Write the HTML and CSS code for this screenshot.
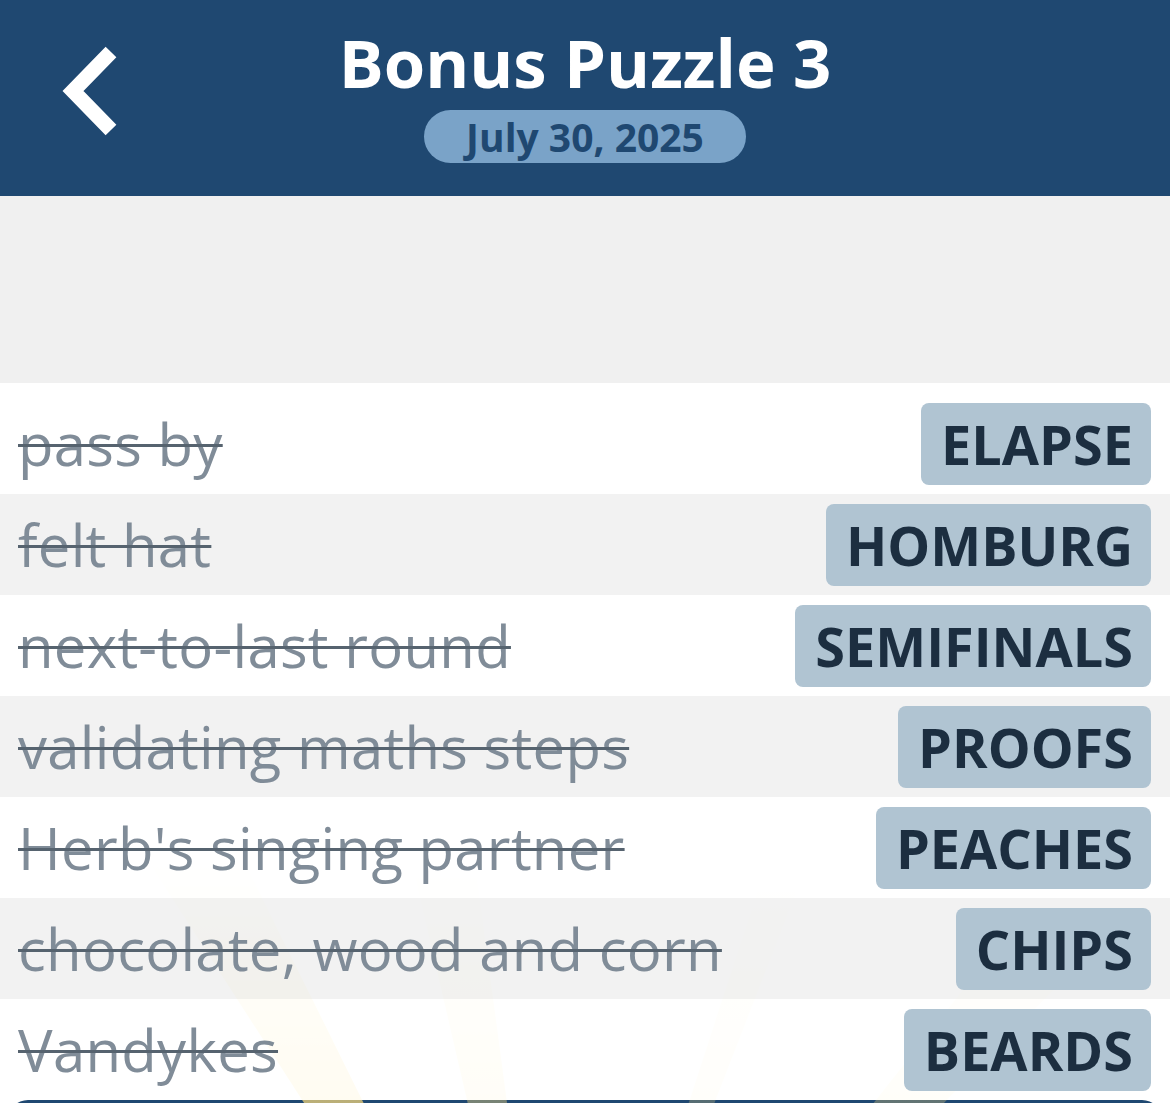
FILE: index.html
```html
<!DOCTYPE html>
<html lang="en">
<head>
  <meta charset="UTF-8">
  <meta name="viewport" content="width=device-width, initial-scale=1.0">
  <title>Bonus Puzzle 3</title>
  <link rel="stylesheet" href="styles.css">
</head>
<body>
  <header class="header">
    <a href="#back" class="back-btn" aria-label="Back">
      <svg width="60" height="90" viewBox="0 0 60 90">
        <polyline points="50,6 12,45 50,84" fill="none" stroke="#fff" stroke-width="15" stroke-linejoin="miter" />
      </svg>
    </a>
    <div class="header-title">
      <h1>Bonus Puzzle 3</h1>
      <div class="date-pill">July 30, 2025</div>
    </div>
  </header>

  <div class="spacer"></div>

  <main class="clue-list">
    <!-- background sunburst -->
    <svg class="rays" width="1170" height="720" viewBox="0 0 1170 720">
      <defs>
        <linearGradient id="ray-fade" gradientUnits="userSpaceOnUse" x1="0" y1="470" x2="0" y2="720">
          <stop offset="0" stop-color="#ffdc7a" stop-opacity="0" />
          <stop offset="1" stop-color="#ffdc7a" stop-opacity="1" />
        </linearGradient>
      </defs>
      <polygon points="560,1117 130,450 230,450" fill="url(#ray-fade)" opacity="0.7" />
      <polygon points="560,1117 370,300 451,300" fill="url(#ray-fade)" opacity="0.4" />
      <polygon points="560,1117 1000,560 1060,600" fill="url(#ray-fade)" opacity="0.3" />
      <polygon points="560,1117 760,500 800,500" fill="url(#ray-fade)" opacity="0.25" />
    </svg>

    <div class="clue-row">
      <span class="clue">pass by</span>
      <span class="answer">ELAPSE</span>
    </div>
    <div class="clue-row">
      <span class="clue">felt hat</span>
      <span class="answer">HOMBURG</span>
    </div>
    <div class="clue-row">
      <span class="clue">next-to-last round</span>
      <span class="answer">SEMIFINALS</span>
    </div>
    <div class="clue-row">
      <span class="clue">validating maths steps</span>
      <span class="answer">PROOFS</span>
    </div>
    <div class="clue-row">
      <span class="clue">Herb's singing partner</span>
      <span class="answer">PEACHES</span>
    </div>
    <div class="clue-row">
      <span class="clue">chocolate, wood and corn</span>
      <span class="answer">CHIPS</span>
    </div>
    <div class="clue-row">
      <span class="clue">Vandykes</span>
      <span class="answer">BEARDS</span>
    </div>
  </main>

  <div class="bottom-bar"></div>
</body>
</html>
```

FILE: styles.css
```css
body {
  font-family: 'Open Sans', 'Liberation Sans', sans-serif;
  margin: 0;
  padding: 0;
  background-color: #fff;
  width: 1170px;
  overflow: hidden;
}
.header {
  background-color: #1f4871;
  height: 196px;
  display: flex;
  align-items: flex-start;
  justify-content: center;
  position: relative;
}
.back-btn {
  position: absolute;
  left: 61px;
  top: 46px;
  display: block;
}
.header-title {
  display: flex;
  flex-direction: column;
  align-items: center;
  padding-top: 25px;
}
.header-title h1 {
  margin: 0;
  font-size: 67px;
  line-height: 74px;
  font-weight: 700;
  color: #fff;
}
.date-pill {
  margin-top: 11px;
  background-color: #7aa3c8;
  color: #1f4871;
  font-size: 39px;
  font-weight: 700;
  line-height: 53px;
  padding: 0 42px;
  border-radius: 27px;
}
.spacer {
  height: 187px;
  background-color: #f0f0f0;
}
.clue-list {
  position: relative;
  padding-top: 10px;
}
.rays {
  position: absolute;
  left: 0;
  top: 0;
  z-index: 0;
  pointer-events: none;
}
.clue-row {
  position: relative;
  z-index: 1;
  height: 101px;
  display: flex;
  align-items: center;
  justify-content: space-between;
  padding: 0 19px 0 18px;
  box-sizing: border-box;
  background-color: rgba(255,255,255,0.85);
}
.clue-row:nth-child(odd) {
  background-color: rgba(240,240,240,0.88);
}
.clue-row:first-of-type {
  margin-top: -10px;
  padding-top: 10px;
  height: 111px;
}
.clue {
  font-size: 58px;
  letter-spacing: 0.3px;
  color: #808c98;
  text-decoration: line-through;
  text-decoration-color: #56636f;
  text-decoration-thickness: 3px;
  white-space: nowrap;
}
.answer {
  background-color: #b0c4d2;
  color: #1c2e40;
  font-size: 54px;
  font-weight: 700;
  line-height: 82px;
  padding: 0 18px 0 20px;
  border-radius: 8px;
}
.bottom-bar {
  height: 40px;
  margin: 0 8px;
  background-color: #1f4871;
  border-radius: 20px 20px 0 0;
}
```
